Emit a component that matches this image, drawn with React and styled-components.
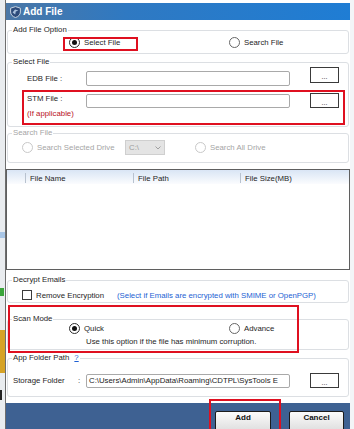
import React from 'react';
import styled, { createGlobalStyle } from 'styled-components';

const GlobalStyle = createGlobalStyle`
  html, body {
    margin: 0;
    padding: 0;
  }
  body {
    width: 354px;
    height: 429px;
    overflow: hidden;
    background: #eef1f4;
    font-family: "Liberation Sans", Arial, sans-serif;
    font-size: 7.8px;
    color: #1e1e1e;
  }
`;

const Page = styled.div`
  position: relative;
  display: flex;
  width: 354px;
  height: 429px;
  overflow: hidden;
`;

// desktop showing behind the dialog on the left
const LeftStrip = styled.div`
  flex: none;
  width: 5px;
  display: flex;
  flex-direction: column;
  background: #e9ecef;
`;

const Swatch = styled.div`
  flex: none;
  height: ${(p) => p.$h}px;
  width: ${(p) => p.$w || 5}px;
  background: ${(p) => p.$c};
`;

const RightStrip = styled.div`
  flex: 1;
  background: #f3f5f7;
`;

const Dialog = styled.div`
  flex: none;
  width: 345px;
  height: 429px;
  box-sizing: border-box;
  display: flex;
  flex-direction: column;
  background: #fff;
  border-left: 1px solid #6e6e6e;
  overflow: hidden;
`;

const TitleBar = styled.div`
  flex: none;
  height: 17px;
  margin-top: 3px;
  display: flex;
  align-items: center;
  gap: 2px;
  padding-left: 4px;
  background: linear-gradient(90deg, #4b77a6 0%, #2f79c2 35%, #1f7dd4 100%);
`;

const Title = styled.span`
  color: #fff;
  font-weight: bold;
  font-size: 10px;
  line-height: 12px;
`;

const Group = styled.div`
  position: relative;
  flex: none;
  box-sizing: border-box;
  height: ${(p) => p.$height}px;
  margin: ${(p) => p.$top}px 1px 0;
  border: 1px solid #dcdfe3;
  border-radius: 3px;
  color: ${(p) => (p.$disabled ? '#a5a5a5' : '#1e1e1e')};
`;

// group caption sits on top of the frame line
const Legend = styled.span`
  position: absolute;
  top: -6px;
  left: 4px;
  padding: 0 1px;
  line-height: 10px;
  background: #fff;
  display: flex;
  gap: 5px;
  white-space: nowrap;
`;

const HelpLink = styled.span`
  color: #1d5fd3;
  text-decoration: underline;
`;

const OptionRow = styled.div`
  display: grid;
  grid-template-columns: ${(p) => p.$cols};
  align-items: center;
  height: ${(p) => p.$h}px;
  margin-top: ${(p) => p.$mt}px;
  padding-left: ${(p) => p.$pl}px;
`;

const Option = styled.label`
  display: flex;
  align-items: center;
  gap: 4px;
  white-space: nowrap;
  padding-left: ${(p) => p.$pl || 0}px;
`;

const RadioDot = styled.span`
  flex: none;
  box-sizing: border-box;
  width: 11px;
  height: 11px;
  border-radius: 50%;
  border: 1px solid ${(p) => (p.$disabled ? '#c9c9c9' : p.$checked ? '#2e2e2e' : '#666')};
  background: #fff;
  display: flex;
  align-items: center;
  justify-content: center;

  &::after {
    content: '';
    display: ${(p) => (p.$checked ? 'block' : 'none')};
    width: 5px;
    height: 5px;
    border-radius: 50%;
    background: #111;
  }
`;

const CheckBox = styled.span`
  flex: none;
  box-sizing: border-box;
  width: 10px;
  height: 10px;
  border: 1px solid #3c3c3c;
  background: #fff;
`;

const FieldRow = styled.div`
  display: grid;
  grid-template-columns: ${(p) => p.$cols};
  height: ${(p) => p.$h}px;
  margin-top: ${(p) => p.$mt}px;
  padding-left: ${(p) => p.$pl}px;
`;

const FieldLabel = styled.span`
  align-self: ${(p) => p.$align || 'center'};
  line-height: ${(p) => p.$lh || 10}px;
  white-space: nowrap;
`;

const TextBox = styled.div`
  box-sizing: border-box;
  align-self: ${(p) => p.$align || 'center'};
  height: ${(p) => p.$h}px;
  border: 1px solid #a9a9a9;
  border-radius: 2px;
  background: #fff;
  padding: 0 2px;
  line-height: ${(p) => p.$h - 2}px;
  white-space: nowrap;
  overflow: hidden;
  color: #222;
`;

const DotsButton = styled.div`
  box-sizing: border-box;
  align-self: ${(p) => p.$align || 'center'};
  width: 29px;
  height: ${(p) => p.$h}px;
  margin-left: 20px;
  border: 1px solid #3a3a3a;
  background: #fff;
  display: flex;
  justify-content: center;
  align-items: center;
  padding-top: 3px;
  font-size: 7px;
  color: #222;
`;

const Hint = styled.div`
  margin-top: ${(p) => p.$mt}px;
  padding-left: ${(p) => p.$pl}px;
  line-height: 10px;
  white-space: nowrap;
  color: ${(p) => p.$color || 'inherit'};
`;

const Combo = styled.div`
  box-sizing: border-box;
  width: 40px;
  height: 15px;
  border: 1px solid #cfcfcf;
  background: #e4e4e4;
  display: flex;
  align-items: center;
  justify-content: space-between;
  padding: 0 3px;
  color: #9c9c9c;
`;

const BlueNote = styled.span`
  color: #1d5fd3;
  white-space: nowrap;
`;

const FileList = styled.div`
  flex: none;
  box-sizing: border-box;
  height: 101px;
  margin-top: 6px;
  border: 1px solid #5f5f5f;
  background: #fff;
`;

const ListHeader = styled.div`
  display: grid;
  grid-template-columns: 18px 108px 107px 1fr;
  height: 14px;
  background: linear-gradient(#d9e5f5, #fbfcfe);
`;

const HeaderCell = styled.div`
  display: flex;
  align-items: center;
  margin: 3px 0 1px;
  padding-left: 4px;
  border-left: ${(p) => (p.$first ? 'none' : '1px solid #b8c2cf')};
  white-space: nowrap;
`;

const Footer = styled.div`
  flex: none;
  box-sizing: border-box;
  height: 26px;
  margin-top: 6px;
  display: flex;
  justify-content: flex-end;
  gap: 18px;
  padding: 8px 6px 0 0;
  background: #3e6192;
  overflow: hidden;
`;

const FooterButton = styled.div`
  flex: none;
  box-sizing: border-box;
  width: ${(p) => p.$w}px;
  height: 21px;
  border: 1px solid #1c1c1c;
  border-radius: 2px;
  background: linear-gradient(#fbfbfb, #dedede);
  display: flex;
  justify-content: center;
  padding-top: 1px;
  line-height: 10px;
  font-weight: bold;
  font-size: 8px;
  color: #111;
`;

// red highlight boxes drawn over the screenshot
const Annotation = styled.div`
  position: absolute;
  left: ${(p) => p.$x}px;
  top: ${(p) => p.$y}px;
  width: ${(p) => p.$w}px;
  height: ${(p) => p.$h}px;
  box-sizing: border-box;
  border: 2px solid #df1020;
  pointer-events: none;
`;

const Logo = () => (
  <svg width="11" height="12" viewBox="0 0 11 12">
    <path
      d="M5.5 0.6 L10.4 2.2 V6 C10.4 8.8 8.2 10.8 5.5 11.5 C2.8 10.8 0.6 8.8 0.6 6 V2.2 Z"
      fill="#2d4b7a"
      stroke="#c8d2de"
      strokeWidth="1"
    />
    <path d="M2.6 6.4 L5 3.6 L8.4 4.6 L5.8 5.6 L5.2 8.6 Z" fill="#a9c0dc" />
  </svg>
);

const Chevron = () => (
  <svg width="6" height="4" viewBox="0 0 6 4">
    <path d="M0.5 0.5 L3 3 L5.5 0.5" fill="none" stroke="#a0a0a0" strokeWidth="1" />
  </svg>
);

const swatches = [
  { h: 232, c: '#e9ecef' },
  { h: 6, c: '#a9c6e6' },
  { h: 50, c: '#e9ecef' },
  { h: 8, c: '#3aa53a', w: 4 },
  { h: 34, c: '#e9ecef' },
  { h: 43, c: '#d6a326' },
  { h: 17, c: '#e9ecef' },
  { h: 10, c: '#222', w: 2 },
  { h: 29, c: '#e9ecef' },
];

const App = () => {
  return (
    <>
      <GlobalStyle />
      <Page>
        <LeftStrip>
          {swatches.map((s, i) => (
            <Swatch key={i} $h={s.h} $c={s.c} $w={s.w} />
          ))}
        </LeftStrip>

        <Dialog>
          <TitleBar>
            <Logo />
            <Title>Add File</Title>
          </TitleBar>

          {/* Add File Option */}
          <Group $top={10} $height={24}>
            <Legend>Add File Option</Legend>
            <OptionRow $cols="160px auto" $h={11} $mt={6} $pl={61}>
              <Option>
                <RadioDot $checked />
                Select File
              </Option>
              <Option>
                <RadioDot />
                Search File
              </Option>
            </OptionRow>
          </Group>

          {/* Select File */}
          <Group $top={8} $height={65}>
            <Legend>Select File</Legend>
            <FieldRow $cols="59px 204px auto" $h={19} $mt={4} $pl={19}>
              <FieldLabel $align="end" $lh={15}>EDB File :</FieldLabel>
              <TextBox $h={15} $align="end" />
              <DotsButton $h={16} $align="start">...</DotsButton>
            </FieldRow>
            <FieldRow $cols="59px 204px auto" $h={15} $mt={7} $pl={19}>
              <FieldLabel $align="start" $lh={12}>STM File :</FieldLabel>
              <TextBox $h={14} $align="end" />
              <DotsButton $h={15}>...</DotsButton>
            </FieldRow>
            <Hint $mt={1} $pl={19} $color="#b8121c">(If applicable)</Hint>
          </Group>

          {/* Search File (disabled) */}
          <Group $top={6} $height={30} $disabled>
            <Legend>Search File</Legend>
            <OptionRow $cols="103px 40px auto" $h={15} $mt={6} $pl={14}>
              <Option>
                <RadioDot $disabled />
                Search Selected Drive
              </Option>
              <Combo>
                C:\
                <Chevron />
              </Combo>
              <Option $pl={30}>
                <RadioDot $disabled />
                Search All Drive
              </Option>
            </OptionRow>
          </Group>

          <FileList>
            <ListHeader>
              <HeaderCell $first />
              <HeaderCell>File Name</HeaderCell>
              <HeaderCell>File Path</HeaderCell>
              <HeaderCell>File Size(MB)</HeaderCell>
            </ListHeader>
          </FileList>

          {/* Decrypt Emails */}
          <Group $top={10} $height={23}>
            <Legend>Decrypt Emails</Legend>
            <OptionRow $cols="95px auto" $h={10} $mt={9} $pl={14}>
              <Option>
                <CheckBox />
                Remove Encryption
              </Option>
              <BlueNote>(Select if Emails are encrypted with SMIME or OpenPGP)</BlueNote>
            </OptionRow>
          </Group>

          {/* Scan Mode */}
          <Group $top={16} $height={31}>
            <Legend>Scan Mode</Legend>
            <OptionRow $cols="160px auto" $h={11} $mt={3} $pl={61}>
              <Option>
                <RadioDot $checked />
                Quick
              </Option>
              <Option>
                <RadioDot />
                Advance
              </Option>
            </OptionRow>
            <Hint $mt={3} $pl={78}>
              Use this option if the file has minimum corruption.
            </Hint>
          </Group>

          {/* App Folder Path */}
          <Group $top={8} $height={39}>
            <Legend>
              App Folder Path
              <HelpLink>?</HelpLink>
            </Legend>
            <FieldRow $cols="65px 8px 204px auto" $h={15} $mt={14} $pl={5}>
              <FieldLabel>Storage Folder</FieldLabel>
              <FieldLabel>:</FieldLabel>
              <TextBox $h={14} $align="end">
                C:\Users\Admin\AppData\Roaming\CDTPL\SysTools E
              </TextBox>
              <DotsButton $h={15}>...</DotsButton>
            </FieldRow>
          </Group>

          <Footer>
            <FooterButton $w={56}>Add</FooterButton>
            <FooterButton $w={55}>Cancel</FooterButton>
          </Footer>
        </Dialog>

        <RightStrip />

        <Annotation $x={63} $y={37} $w={75} $h={14} />
        <Annotation $x={22} $y={90} $w={323} $h={35} />
        <Annotation $x={8} $y={305} $w={291} $h={48} />
        <Annotation $x={209} $y={399} $w={72} $h={32} />
      </Page>
    </>
  );
};

export default App;
